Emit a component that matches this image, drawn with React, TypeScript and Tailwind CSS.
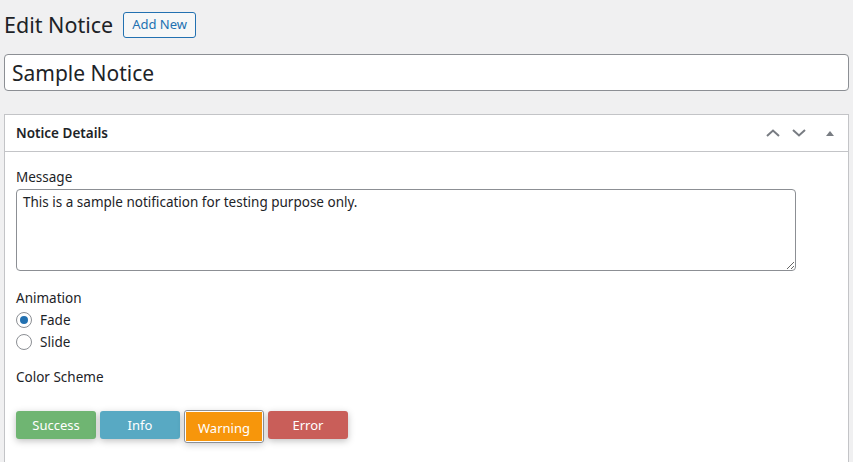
export default function App() {
  return (
    <div className="min-h-[462px] bg-[#f0f0f1] px-[4px] font-['Noto_Sans',sans-serif] text-[#1d2327]">
      <div className="flex items-center gap-[10px] pt-[12px]">
        <h1 className="text-[21.5px] leading-[26px] font-normal">Edit Notice</h1>
        <button className="h-[26px] rounded-[3px] border border-[#2271b1] bg-[#f6f7f7] px-[8px] text-[13px] text-[#2271b1]">
          Add New
        </button>
      </div>

      <input
        className="mt-[16px] block h-[37px] w-full rounded-[4px] border border-[#8c8f94] bg-white px-[7px] text-[21px] text-[#1d2327] outline-none"
        defaultValue="Sample Notice"
      />

      <div className="mt-[23px] border border-[#c3c4c7] bg-white">
        <div className="flex h-[37px] items-center justify-between border-b border-[#c3c4c7] pl-[11px] pr-[14px]">
          <h2 className="text-[13.5px] font-semibold">Notice Details</h2>
          <div className="flex items-center text-[#787c82]">
            <svg width="14" height="8" viewBox="0 0 14 8" className="mr-[12px]">
              <polyline points="1,7 7,1.5 13,7" fill="none" stroke="currentColor" strokeWidth="2" />
            </svg>
            <svg width="14" height="8" viewBox="0 0 14 8" className="mr-[20px]">
              <polyline points="1,1 7,6.5 13,1" fill="none" stroke="currentColor" strokeWidth="2" />
            </svg>
            <svg width="8" height="5" viewBox="0 0 8 5">
              <polygon points="0,5 4,0 8,5" fill="currentColor" />
            </svg>
          </div>
        </div>

        <div className="pl-[11px] pb-[20px] text-[13.5px]">
          <div className="mt-[15px] leading-[20px]">Message</div>
          <textarea
            className="mt-[2px] block h-[82px] w-[780px] rounded-[4px] border border-[#8c8f94] px-[6px] py-[2px] text-[13.5px] leading-[20px] outline-none"
            defaultValue="This is a sample notification for testing purpose only."
          />

          <div className="mt-[17px] leading-[20px]">Animation</div>
          <div className="mt-[1px]">
            <label className="flex h-[22px] items-center gap-[8px]">
              <span className="flex h-[16px] w-[16px] items-center justify-center rounded-full border border-[#8c8f94]">
                <span className="h-[8px] w-[8px] rounded-full bg-[#2271b1]" />
              </span>
              Fade
            </label>
            <label className="flex h-[22px] items-center gap-[8px]">
              <span className="h-[16px] w-[16px] rounded-full border border-[#8c8f94]" />
              Slide
            </label>
          </div>

          <div className="mt-[14px] leading-[20px]">Color Scheme</div>
          <div className="mt-[24px] flex items-start gap-[4px] text-[13px] text-white">
            <button className="h-[28px] w-[80px] rounded-[3px] bg-[#6fb572] pt-[2px] shadow-[0_2px_7px_rgba(0,0,0,0.25)]">
              Success
            </button>
            <button className="h-[28px] w-[80px] rounded-[3px] bg-[#58a9c3] pt-[2px] shadow-[0_2px_7px_rgba(0,0,0,0.25)]">
              Info
            </button>
            <button className="-mt-px h-[33px] w-[80px] rounded-[3px] border border-[#8c8f94] bg-white p-px shadow-[0_2px_7px_rgba(0,0,0,0.2)]">
              <span className="flex h-full w-full items-center justify-center bg-[#f7960b] pt-[4px]">Warning</span>
            </button>
            <button className="h-[28px] w-[80px] rounded-[3px] bg-[#c95e59] pt-[2px] shadow-[0_2px_7px_rgba(0,0,0,0.25)]">
              Error
            </button>
          </div>
        </div>
      </div>
    </div>
  )
}
